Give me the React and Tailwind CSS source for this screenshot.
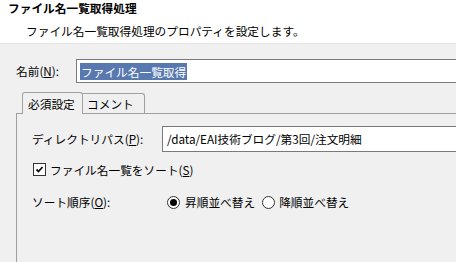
import React from 'react';

const Mn = ({ children }) => <span className="underline underline-offset-[1px]">{children}</span>;

const Radio = ({ checked }) => (
  <span className="w-[13px] h-[13px] rounded-full border border-[#333333] bg-white flex items-center justify-center shrink-0">
    {checked && <span className="w-[7px] h-[7px] rounded-full bg-black" />}
  </span>
);

export default function App() {
  return (
    <div className="w-[456px] h-[262px] overflow-hidden bg-[#f0f0f0] text-black text-[11.7px] leading-[14px] font-['Noto_Sans_CJK_JP','Noto_Sans',sans-serif]">
      {/* header */}
      <div className="h-[44px] bg-white border-b border-[#e3e3e3]">
        <div className="pl-[8px] h-[16px] leading-[16px] font-bold">ファイル名一覧取得処理</div>
        <div className="pl-[26px] mt-[8px]">ファイル名一覧取得処理のプロパティを設定します。</div>
      </div>

      {/* name */}
      <div className="mt-[15px] flex items-center h-[24px]">
        <div className="pl-[16px] w-[76px] shrink-0">
          名前(<Mn>N</Mn>):
        </div>
        <div className="flex-1 h-[24px] border border-r-0 border-[#7a7a7a] bg-white pl-[3px] flex items-center">
          <span className="bg-[#5878b0] text-white h-[17px] leading-[17px] px-[1px]">ファイル名一覧取得</span>
        </div>
      </div>

      {/* tabs */}
      <div className="mt-[9px] flex items-end pl-[22px] h-[21px]">
        <div className="relative z-10 -mb-px w-[61px] h-[22px] border border-b-0 border-[#a0a0a0] rounded-t-[3px] bg-[#f0f0f0] pl-[5px] flex items-center">
          必須設定
        </div>
        <div className="w-[62px] h-[20px] border border-b-0 border-l-0 border-[#a0a0a0] rounded-tr-[3px] bg-[#f0f0f0] pl-[4px] flex items-center">
          コメント
        </div>
      </div>

      {/* panel */}
      <div className="ml-[16px] h-[200px] border-l border-t border-[#a0a0a0] pl-[15px] pt-[12px]">
        <div className="flex items-center h-[26px]">
          <div className="w-[130px] shrink-0">
            ディレクトリパス(<Mn>P</Mn>):
          </div>
          <div className="flex-1 h-[26px] border border-r-0 border-[#7a7a7a] bg-white pl-[4px] flex items-center whitespace-nowrap">
            /data/EAI技術ブログ/第3回/注文明細
          </div>
        </div>

        <div className="mt-[11px] flex items-center h-[13px] pl-[1px]">
          <span className="w-[13px] h-[13px] border border-[#333333] bg-white flex items-center justify-center shrink-0">
            <svg width="9" height="9" viewBox="0 0 9 9">
              <path d="M1.5 4.5 L3.5 6.5 L7.5 2" fill="none" stroke="#111" strokeWidth="1.8" />
            </svg>
          </span>
          <span className="ml-[4px]">
            ファイル名一覧をソート(<Mn>S</Mn>)
          </span>
        </div>

        <div className="mt-[19px] flex items-center h-[14px]">
          <div className="w-[135px] shrink-0">
            ソート順序(<Mn>O</Mn>):
          </div>
          <Radio checked />
          <span className="ml-[5px]">昇順並べ替え</span>
          <span className="ml-[7px]">
            <Radio />
          </span>
          <span className="ml-[4px]">降順並べ替え</span>
        </div>
      </div>
    </div>
  );
}
